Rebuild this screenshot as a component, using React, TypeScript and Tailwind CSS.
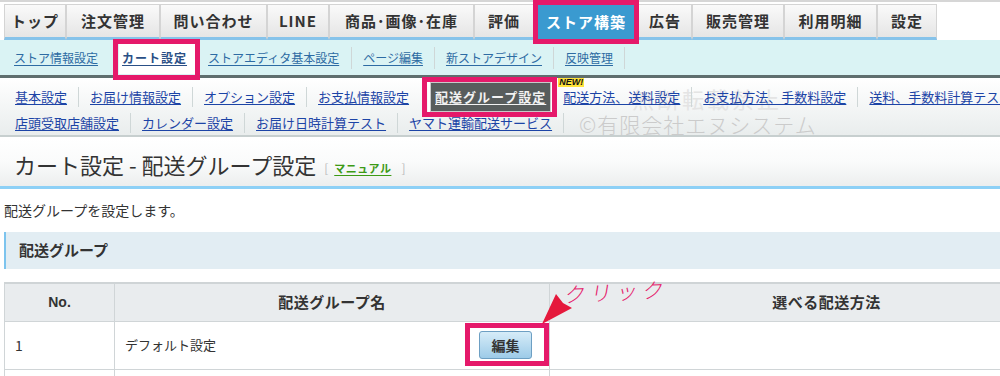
import React from "react";

const PINK = "border-[#e5196a]";

const tabs = [
  { label: "トップ", w: "w-[62px]" },
  { label: "注文管理", w: "w-[94px]" },
  { label: "問い合わせ", w: "w-[107px]" },
  { label: "LINE", w: "w-[62px]" },
  { label: "商品･画像･在庫", w: "w-[145px]" },
  { label: "評価", w: "w-[60px]" },
  { label: "ストア構築", w: "w-[104px]", active: true },
  { label: "広告", w: "w-[54px]" },
  { label: "販売管理", w: "w-[92px]" },
  { label: "利用明細", w: "w-[93px]" },
  { label: "設定", w: "w-[60px]" },
];

const subMenu = ["ストア情報設定", "カート設定", "ストアエディタ基本設定", "ページ編集", "新ストアデザイン", "反映管理"];

const cartRow1 = [
  "基本設定",
  "お届け情報設定",
  "オプション設定",
  "お支払情報設定",
  "配送グループ設定",
  "配送方法、送料設定",
  "お支払方法、手数料設定",
  "送料、手数料計算テスト",
];
const cartRow2 = ["店頭受取店舗設定", "カレンダー設定", "お届け日時計算テスト", "ヤマト運輸配送サービス"];

function Sep({ h = "h-[20px]" }: { h?: string }) {
  return <span className={`w-px ${h} bg-[#cfd7d7] shrink-0`} />;
}

export default function App() {
  return (
    <div className="relative w-[1000px] h-[376px] overflow-hidden bg-white text-[#333] font-['Noto_Sans_CJK_JP','Noto_Sans',sans-serif]">
      {/* Main tabs */}
      <div className="flex h-[40px] pt-[2px] pl-[4px] border-t-2 border-[#d6d6d6]">
        {tabs.map((t) =>
          t.active ? (
            <div key={t.label} className={`relative z-20 ${t.w} flex items-center justify-center bg-[#3a9ad0] text-white text-[15px] font-bold tracking-[1px]`}>
              {t.label}
              <span className={`absolute -left-[1px] -right-[1px] -top-[4px] -bottom-[4px] border-[5px] ${PINK}`} />
            </div>
          ) : (
            <div
              key={t.label}
              className={`${t.w} flex items-center justify-center border-x border-t border-[#d4d4d4] border-b-[3px] border-b-[#86c3ea] bg-gradient-to-b from-[#fafafa] to-[#e5e5e5] text-[15px] font-bold tracking-[1px] pt-[1px]`}
            >
              {t.label}
            </div>
          )
        )}
      </div>

      {/* Store construction submenu */}
      <div className="flex items-center h-[38px] pl-[4px] bg-[#daf3f4] border-b-[3px] border-[#5f6e6e] text-[12px]">
        {subMenu.map((s, i) => (
          <React.Fragment key={s}>
            {i > 2 && <Sep h="h-[22px]" />}
            {i === 1 ? (
              <span className="relative z-20 ml-[21px] mr-[13px] pl-[3px] pr-[8px] h-[33px] flex items-center bg-white">
                <span className="text-[#2a4f86] font-bold underline underline-offset-2 tracking-[1px]">{s}</span>
                <span className={`absolute -left-[6px] -right-[5px] -top-[2px] -bottom-[6px] border-[5px] ${PINK}`} />
              </span>
            ) : (
              <span className={`${i === 0 ? "pl-[10px]" : i === 2 ? "pr-[12px]" : "px-[11px]"} text-[#2d6ba3] underline underline-offset-2`}>{s}</span>
            )}
          </React.Fragment>
        ))}
        <Sep h="h-[22px]" />
      </div>

      {/* Cart settings submenu */}
      <div className="relative h-[59px] pl-[4px] pt-[6px] bg-gradient-to-b from-white to-[#e9eded] border-b-2 border-[#c7cfcf] text-[13px] whitespace-nowrap">
        {/* watermarks */}
        <span className="absolute left-[632px] top-[4px] text-[22px] text-[#e4e4e4] tracking-[3px] pointer-events-none">
          無断転載禁止
        </span>
        <span className="absolute left-[579px] top-[31px] text-[21px] font-light text-[#cbcbcb] tracking-[1px] pointer-events-none">
          ©有限会社エヌシステム
        </span>

        <div className="relative flex items-center h-[26px]">
          {cartRow1.map((s, i) => (
            <React.Fragment key={s}>
              {i > 0 && i !== 4 && i !== 5 && <Sep />}
              {i === 4 ? (
                <span className="relative z-20 ml-[10px] mr-[1px] flex items-center h-[30px] px-[4px] bg-[#585d5d] border border-[#c9c9c9] outline-2 outline-white">
                  <span className="text-[#f2f2f2] font-bold underline underline-offset-2 tracking-[1px]">{s}</span>
                  <span className={`absolute -left-[9px] -right-[7px] -top-[6px] -bottom-[6px] border-[5px] ${PINK}`} />
                </span>
              ) : (
                <span className="relative px-[11px] text-[#1c44a6] underline underline-offset-2">
                  {i === 5 && (
                    <span className="absolute left-[6px] -top-[9px] bg-[#ffe33b] text-[#111] text-[9px] font-bold italic leading-[9px] px-px font-['Liberation_Sans',sans-serif]">
                      NEW!
                    </span>
                  )}
                  {s}
                </span>
              )}
            </React.Fragment>
          ))}
        </div>
        <div className="relative flex items-center h-[25px]">
          {cartRow2.map((s, i) => (
            <React.Fragment key={s}>
              {i > 0 && <Sep />}
              <span className="px-[11px] text-[#1c44a6] underline underline-offset-2">{s}</span>
            </React.Fragment>
          ))}
          <Sep />
        </div>
      </div>

      {/* Page title */}
      <div className="mt-px h-[51px] flex items-center pl-[14px] pt-[4px] bg-gradient-to-b from-white via-[#fafbfb] to-[#eceeee] border-b-[3px] border-[#8dd0f6]">
        <h1 className="text-[22px] font-normal text-[#333]">カート設定 - 配送グループ設定</h1>
        <span className="ml-[8px] mt-[8px] text-[12px] text-[#bbb]">[</span>
        <a className="ml-[6px] mt-[8px] text-[11px] font-bold text-[#3c9a15] underline underline-offset-2 tracking-[0.5px]">マニュアル</a>
        <span className="ml-[10px] mt-[8px] text-[12px] text-[#bbb]">]</span>
      </div>

      <div className="h-[43px] flex items-center pl-[4px] text-[14px] text-[#333]">配送グループを設定します。</div>

      {/* Section header */}
      <div className="ml-[4px] h-[37px] flex items-center pl-[13px] bg-[#e2edf3] border-l-2 border-[#7cc4ee] text-[15px] font-bold text-[#333]">
        配送グループ
      </div>

      {/* Table */}
      <table className="mt-[13px] ml-[4px] w-[1100px] border-collapse border-t-2 border-[#cfd4d6] text-[#333]">
        <thead>
          <tr className="h-[38px] bg-[#e9ecee]">
            <th className="w-[110px] border border-[#d0d5d7] text-[14px] font-bold font-['Liberation_Sans',sans-serif]">No.</th>
            <th className="w-[435px] border border-[#d0d5d7] text-[15px] font-bold tracking-[0.5px]">配送グループ名</th>
            <th className="border border-[#d0d5d7] text-[15px] font-bold tracking-[0.5px]">選べる配送方法</th>
          </tr>
        </thead>
        <tbody>
          <tr className="h-[48px]">
            <td className="border border-[#d0d5d7] pl-[10px] text-[14px]">1</td>
            <td className="border border-[#d0d5d7] pl-[10px] text-[13px]">
              <div className="flex items-center">
                <span className="w-[354px]">デフォルト設定</span>
                <span className="relative">
                  <button className="w-[53px] h-[28px] rounded-[3px] border border-[#6d9fc3] bg-gradient-to-b from-[#d6ecf8] to-[#9dcbe8] text-[14px] font-bold text-[#333]">
                    編集
                  </button>
                  <span className={`absolute -left-[14px] -right-[17px] -top-[8px] -bottom-[7px] border-[5px] ${PINK}`} />
                </span>
              </div>
            </td>
            <td className="border border-[#d0d5d7]" />
          </tr>
          <tr className="h-[30px]">
            <td className="border border-[#d0d5d7]" />
            <td className="border border-[#d0d5d7]" />
            <td className="border border-[#d0d5d7]" />
          </tr>
        </tbody>
      </table>

      {/* Annotation: arrow + handwritten label */}
      <svg className="absolute left-[530px] top-[285px] pointer-events-none" width="60" height="45" viewBox="0 0 60 45">
        <polygon points="12,39 26,9 33,18 42,23" fill="#e5193c" />
      </svg>
      <span className="absolute left-[565px] top-[276px] text-[21px] font-light text-[#e5196a] tracking-[5px] -skew-x-12 -rotate-3 pointer-events-none">
        クリック
      </span>
    </div>
  );
}
